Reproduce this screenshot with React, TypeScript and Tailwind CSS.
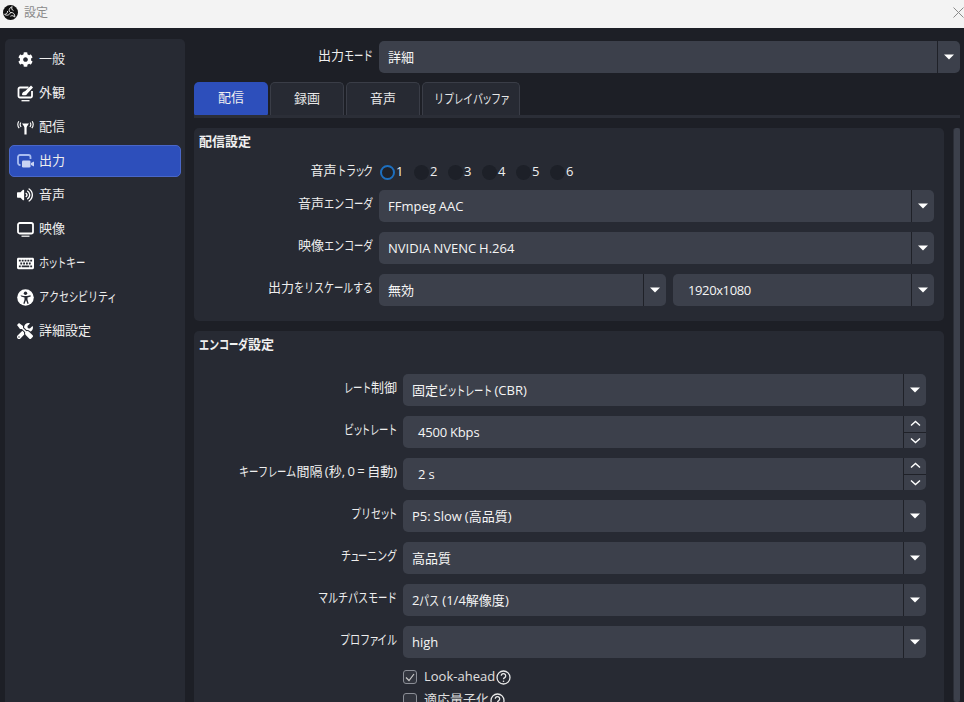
import React from "react";
import { FaCog, FaVolumeUp, FaKeyboard, FaTools } from "react-icons/fa";

const font = { fontFamily: '"Open Sans","Noto Sans CJK JP",sans-serif' };

function K({ t }: { t: string }) {
  const chars = Array.from(t);
  return (
    <>
      {chars.map((c, i) => {
        if (/[ァィゥェォッャュョ]/.test(c)) {
          return <span key={i} className="inline-block w-[7.5px] origin-left scale-x-[.78] -translate-x-px text-left">{c}</span>;
        }
        if (/[トレーシ]/.test(c)) {
          return <span key={i} className="inline-block w-[9px] origin-left scale-x-[.72] text-left">{c}</span>;
        }
        if (/[\u3040-\u30ff]/.test(c)) {
          return <span key={i} className="inline-block w-[10px] origin-left scale-x-[.78] text-left">{c}</span>;
        }
        return <span key={i}>{c}</span>;
      })}
    </>
  );
}

function ObsLogo() {
  return (
    <svg width="15" height="15" viewBox="0 0 16 16">
      <circle cx="8" cy="8" r="8" fill="#111111" />
      <path d="M8 8C5.800 6.500 6 3.200 9.800 1.800 8.800 3.400 9.300 5.400 11.200 6" fill="none" stroke="#f3f3f3" strokeWidth="1" />
      <path d="M8 8c2.600-.4 5 1.500 4.600 5-1-1.500-3-2.200-4.700-1" fill="none" stroke="#f3f3f3" strokeWidth="1" />
      <path d="M8 8c-.9 2.600-3.800 3.800-6.300 2 1.800-.1 3.300-1.500 3.200-3.600" fill="none" stroke="#f3f3f3" strokeWidth="1" />
    </svg>
  );
}

const MonitorBrush = () => (
  <svg width="17" height="17" viewBox="0 0 17 17" fill="none" stroke="white" strokeWidth="1.800">
    <path d="M11.500 2.500H3a1.500 1.500 0 0 0-1.500 1.500v7A1.500 1.500 0 0 0 3 12.500h10.500a1.500 1.500 0 0 0 1.500-1.500V6" />
    <path d="M4.500 15.700h8" strokeWidth="1.300" />
    <path d="M5 10c0-2 1-3.500 3-3.700L14 .6l2 1.800-5.600 6C10 10 7.500 10.800 5 10z" fill="white" stroke="none" />
  </svg>
);
const Antenna = () => (
  <svg width="17" height="15" viewBox="0 0 17 15" fill="none" stroke="white">
    <path d="M8.500 6v8.500" strokeWidth="2.200" />
    <path d="M5 3.500h7L8.500 8.500z" fill="white" stroke="none" />
    <path d="M3.800 2.500q-1.400 2.300 .3 4.500M1.800 1.200q-2.200 3.600 .4 7M13.200 2.500q1.400 2.300-.3 4.500M15.200 1.200q2.200 3.600-.4 7" strokeWidth="1.100" />
  </svg>
);
const Camera = () => (
  <svg width="17" height="15" viewBox="0 0 17 15" fill="none">
    <path d="M3.500 11H3a2 2 0 0 1-2-2V3a2 2 0 0 1 2-2h8.500a2 2 0 0 1 2 2v2" stroke="#a9bdf0" strokeWidth="1.800" />
    <rect x="5" y="6.500" width="8.500" height="7" rx="1.300" fill="#c9d4f3" />
    <path d="M14 9l3-1.500v5L14 11z" fill="#c9d4f3" />
  </svg>
);
const Monitor = () => (
  <svg width="17" height="15" viewBox="0 0 17 15" fill="none" stroke="white" strokeWidth="1.800">
    <rect x="1" y="1" width="15" height="10.500" rx="1.800" />
    <path d="M4.500 14.200h8" strokeWidth="1.200" />
  </svg>
);
const Access = () => (
  <svg width="17" height="17" viewBox="0 0 17 17">
    <circle cx="8.500" cy="8.500" r="8.300" fill="white" />
    <circle cx="8.500" cy="4.300" r="1.700" fill="#272a33" />
    <path d="M3.500 6.300l3.500.7h3l3.500-.7.300 1.200-3.300 1v2.300l1.200 3.700-1.200.4-1.300-3.500h-.4l-1.300 3.500-1.200-.4 1.200-3.700V8.500l-3.300-1z" fill="#272a33" />
  </svg>
);

const items = [
  { t: "一般", i: <FaCog size={15} color="white" /> },
  { t: "外観", i: <MonitorBrush /> },
  { t: "配信", i: <Antenna /> },
  { t: "出力", i: <Camera />, active: true },
  { t: "音声", i: <FaVolumeUp size={16} color="white" /> },
  { t: "映像", i: <Monitor /> },
  { t: "ホットキー", i: <FaKeyboard size={17} color="white" /> },
  { t: "アクセシビリティ", i: <Access /> },
  { t: "詳細設定", i: <FaTools size={16} color="white" /> },
];

function Arrow() {
  return (
    <div className="w-[23px] h-full flex items-center justify-center border-l border-[#1f2128]">
      <svg width="10" height="6" viewBox="0 0 10 6"><path d="M0 .5h10L5 5.500z" fill="white" /></svg>
    </div>
  );
}

function Combo({ v, className = "", pad = "pl-[9px]" }: { v: string; className?: string; pad?: string }) {
  return (
    <div className={`h-8 bg-[#3c404b] rounded-[5px] flex items-center text-[13px] text-[#f5f5f5] ${className}`}>
      <span className={`flex-1 whitespace-nowrap pt-px [word-spacing:-0.5px] ${pad}`}><K t={v} /></span>
      <Arrow />
    </div>
  );
}

function Spin({ v }: { v: string }) {
  return (
    <div className="h-8 flex-1 bg-[#3c404b] rounded-[5px] flex items-center text-[13px] text-[#f5f5f5]">
      <span className="flex-1 pl-[15px] pt-px tracking-[-0.2px]">{v}</span>
      <div className="w-[23px] h-full flex flex-col border-l border-[#1f2128]">
        <div className="flex-1 flex items-center justify-center border-b border-[#1f2128]">
          <svg width="11" height="7" viewBox="0 0 11 7" fill="none" stroke="white" strokeWidth="1.400"><path d="M1 5.500l4.500-4 4.500 4" /></svg>
        </div>
        <div className="flex-1 flex items-center justify-center">
          <svg width="11" height="7" viewBox="0 0 11 7" fill="none" stroke="white" strokeWidth="1.400"><path d="M1 1.500l4.500 4 4.500-4" /></svg>
        </div>
      </div>
    </div>
  );
}

function Row({ label, w, children }: { label: string; w: string; children: React.ReactNode }) {
  return (
    <div className="flex items-center gap-[6px]">
      <div className={`${w} shrink-0 text-right text-[13px] text-[#eeeeee] pb-[5px] whitespace-nowrap [word-spacing:-1px]`}><K t={label} /></div>
      <div className="flex-1 flex gap-[7px]">{children}</div>
    </div>
  );
}

function Help() {
  return (
    <svg width="15" height="15" viewBox="0 0 15 15" fill="none" stroke="#e8e8e8" strokeWidth="1.300">
      <circle cx="7.500" cy="7.500" r="6.500" />
      <path d="M5.300 5.800a2.200 2.200 0 1 1 3.400 1.800c-.8.500-1.200 .9-1.200 1.700" />
      <circle cx="7.500" cy="11.200" r=".8" fill="#e8e8e8" stroke="none" />
    </svg>
  );
}

function Check({ label, on }: { label: string; on?: boolean }) {
  return (
    <div className="flex items-center gap-[7px] h-[18px] text-[13px] text-[#e0e0e0]">
      <div className="w-[14px] h-[14px] rounded-[3px] border border-[#8b8e96] bg-[#32353e] flex items-center justify-center">
        {on && <svg width="10" height="9" viewBox="0 0 10 9" fill="none" stroke="#c8c8c8" strokeWidth="1.200"><path d="M1 4.500l3 3 5-6.500" /></svg>}
      </div>
      <div className="flex items-center gap-px"><span>{label}</span><Help /></div>
    </div>
  );
}

function Radio({ n, on }: { n: number; on?: boolean }) {
  return (
    <div className="flex items-center w-[34px] text-[13px] text-[#eeeeee]">
      <div className={`w-[15px] h-[15px] rounded-full ${on ? "bg-[#1f2128] border-2 border-[#1d6fbf]" : "bg-[#1d2028]"}`} />
      <span className="ml-px">{n}</span>
    </div>
  );
}

function Tab({ t, w, active }: { t: string; w: string; active?: boolean }) {
  return (
    <div className={`${w} h-[34px] flex items-center justify-center whitespace-nowrap rounded-t-[5px] text-[13px] pb-[2px] ${active ? "bg-[#2d4fbb] text-[#f0f0f0] rounded-b-[3px]" : "bg-[#272a33] border-x border-t border-[#3a3d47] text-[#e8e8e8]"}`}><K t={t} /></div>
  );
}

export default function App() {
  return (
    <div className="w-[964px] h-[702px] overflow-hidden flex flex-col bg-[#1d1f26]" style={font}>
      <div className="h-[28px] shrink-0 bg-[#f3f3f3] flex items-center pl-[3px] pb-[3px]">
        <ObsLogo />
        <span className="ml-[6px] text-[12px] text-[#8a8a8a] flex-1">設定</span>
        <svg width="11" height="11" viewBox="0 0 11 11" stroke="#8a8a8a" strokeWidth="1"><path d="M.5 .5l10 10M10.500 .5l-10 10" /></svg>
      </div>
      <div className="flex-1 flex min-h-0 pt-[11px] pl-[5px]">
        <div className="w-[180px] shrink-0 bg-[#272a33] rounded-t-[5px] px-[4px] pt-[4px] flex flex-col gap-[2px]">
          {items.map((it) => (
            <div key={it.t} className={`h-8 flex items-center rounded-[5px] text-[13px] text-[#eeeeee] ${it.active ? "bg-[#2d4fbb] border border-[#4a67c8] pl-[6px]" : "pl-[7px]"}`}>
              <div className="w-[18px] flex justify-center">{it.i}</div>
              <span className="ml-[5px] whitespace-nowrap"><K t={it.t} /></span>
            </div>
          ))}
        </div>
        <div className="flex-1 min-w-0 ml-[9px] pr-[4px] flex flex-col">
          <div className="h-8 mt-[2px] flex items-center gap-[6px]">
            <div className="w-[179px] shrink-0 text-right text-[13px] text-[#eeeeee] pb-[3px] whitespace-nowrap"><K t="出力モード" /></div>
            <Combo v="詳細" className="flex-1" />
          </div>
          <div className="flex gap-[2px] mt-[9px]">
            <Tab t="配信" w="w-[74px]" active />
            <Tab t="録画" w="w-[74px]" />
            <Tab t="音声" w="w-[74px]" />
            <Tab t="リプレイバッファ" w="w-[98px]" />
          </div>
          <div className="h-[3px] bg-[#2b2e37] -mt-px" />
          <div className="flex-1 min-h-0 flex mt-[10px] overflow-hidden">
            <div className="w-[750px] shrink-0 flex flex-col gap-[10px]">
              <div className="h-[193px] bg-[#272a33] rounded-[5px] shrink-0 pl-[5px] pr-[10px] pt-[4px]">
                <div className="text-[13px] font-bold text-[#f0f0f0] h-[18px] leading-[18px]"><K t="配信設定" /></div>
                <div className="mt-[10px] flex flex-col">
                  <div className="flex items-center gap-[6px] h-[24px]">
                    <div className="w-[174px] shrink-0 text-right text-[13px] text-[#eeeeee] pb-[3px] whitespace-nowrap"><K t="音声トラック" /></div>
                    <div className="flex ml-px">
                      {[1, 2, 3, 4, 5, 6].map((n) => <Radio key={n} n={n} on={n === 1} />)}
                    </div>
                  </div>
                  <div className="mt-[6px] flex flex-col gap-[10px]">
                    <Row label="音声エンコーダ" w="w-[174px]"><Combo v="FFmpeg AAC" className="flex-1" /></Row>
                    <Row label="映像エンコーダ" w="w-[174px]"><Combo v="NVIDIA NVENC H.264" className="flex-1" /></Row>
                    <Row label="出力をリスケールする" w="w-[174px]">
                      <Combo v="無効" className="w-[287px]" />
                      <Combo v="1920x1080" className="flex-1 tracking-[-0.4px]" pad="pl-[15px]" />
                    </Row>
                  </div>
                </div>
              </div>
              <div className="flex-1 bg-[#272a33] rounded-t-[5px] pl-[5px] pr-[18px] pt-[4px]">
                <div className="text-[13px] font-bold text-[#f0f0f0] h-[18px] leading-[18px]"><K t="エンコーダ設定" /></div>
                <div className="mt-[21px] flex flex-col gap-[10px]">
                  <Row label="レート制御" w="w-[198px]"><Combo v="固定ビットレート (CBR)" className="flex-1" /></Row>
                  <Row label="ビットレート" w="w-[198px]"><Spin v="4500 Kbps" /></Row>
                  <Row label="キーフレーム間隔 (秒, 0 = 自動)" w="w-[198px]"><Spin v="2 s" /></Row>
                  <Row label="プリセット" w="w-[198px]"><Combo v="P5: Slow (高品質)" className="flex-1" /></Row>
                  <Row label="チューニング" w="w-[198px]"><Combo v="高品質" className="flex-1" /></Row>
                  <Row label="マルチパスモード" w="w-[198px]"><Combo v="2パス (1/4解像度)" className="flex-1" /></Row>
                  <Row label="プロファイル" w="w-[198px]"><Combo v="high" className="flex-1" /></Row>
                </div>
                <div className="ml-[204px] mt-[10px] flex flex-col gap-[5px]">
                  <Check label="Look-ahead" on />
                  <Check label="適応量子化" />
                </div>
              </div>
            </div>
            <div className="ml-[9px] w-[8px] bg-[#3c404b] rounded-[3px] border-x border-[#2b2e37] shrink-0" />
          </div>
        </div>
      </div>
    </div>
  );
}
